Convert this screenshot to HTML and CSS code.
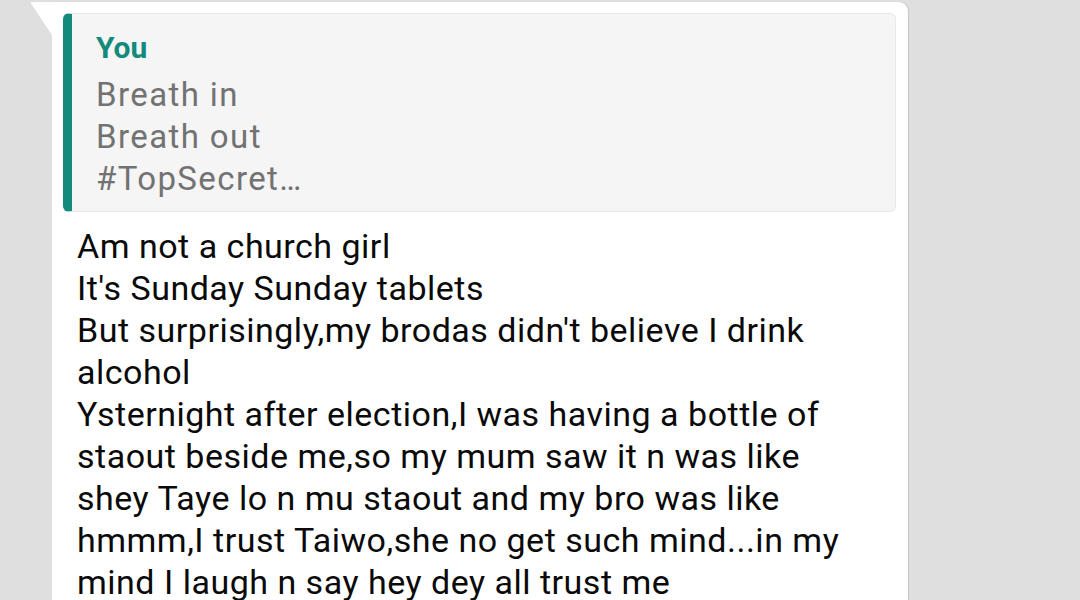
FILE: index.html
```html
<!DOCTYPE html>
<html>
<head>
<meta charset="utf-8">
<link rel="stylesheet" href="styles.css">
</head>
<body>
<div class="chat">
  <div class="bubble">
    <div class="quote">
      <div class="quote-author">You</div>
      <div class="quote-text">Breath in<br>Breath out<br>#TopSecret…</div>
    </div>
    <div class="message">Am not a church girl<br>It's Sunday Sunday tablets<br>But surprisingly,my brodas didn't believe I drink alcohol<br>Ysternight after election,I was having a bottle of staout beside me,so my mum saw it n was like shey Taye lo n mu staout and my bro was like hmmm,I trust Taiwo,she no get such mind...in my mind I laugh n say hey dey all trust me</div>
  </div>
</div>
</body>
</html>
```

FILE: styles.css
```css
html, body {
  margin: 0;
  padding: 0;
  background: #dfdfdf;
  height: 100%;
  overflow: hidden;
}
.chat {
  padding: 2px 0 0 52px;
}
.bubble {
  position: relative;
  width: 856px;
  background: #ffffff;
  border-radius: 0 9px 9px 9px;
  box-shadow: 1px 0 1px rgba(0, 0, 0, 0.12);
  padding: 11px 12px 20px 11px;
  box-sizing: border-box;
  min-height: 620px;
  font-family: Roboto, "Noto Sans", sans-serif;
}
.bubble::before {
  content: "";
  position: absolute;
  left: -22px;
  top: 0;
  width: 22px;
  height: 33px;
  background: #ffffff;
  clip-path: polygon(0 0, 100% 0, 100% 100%);
  border-top-left-radius: 3px;
}
.quote {
  background: #f5f5f5;
  border: 1px solid #e8e8e8;
  border-left: 9px solid #138a7b;
  border-radius: 6px;
  height: 199px;
  box-sizing: border-box;
  padding: 8px 20px 0 24px;
}
.quote-author {
  color: #138a7b;
  font-weight: 700;
  font-size: 30px;
  line-height: 52px;
}
.quote-text {
  color: #727272;
  font-size: 33px;
  letter-spacing: 1.4px;
  line-height: 42px;
}
.message {
  color: #0a0a0a;
  font-size: 34px;
  letter-spacing: 0.5px;
  line-height: 42px;
  padding: 13px 30px 0 14px;
}
```
